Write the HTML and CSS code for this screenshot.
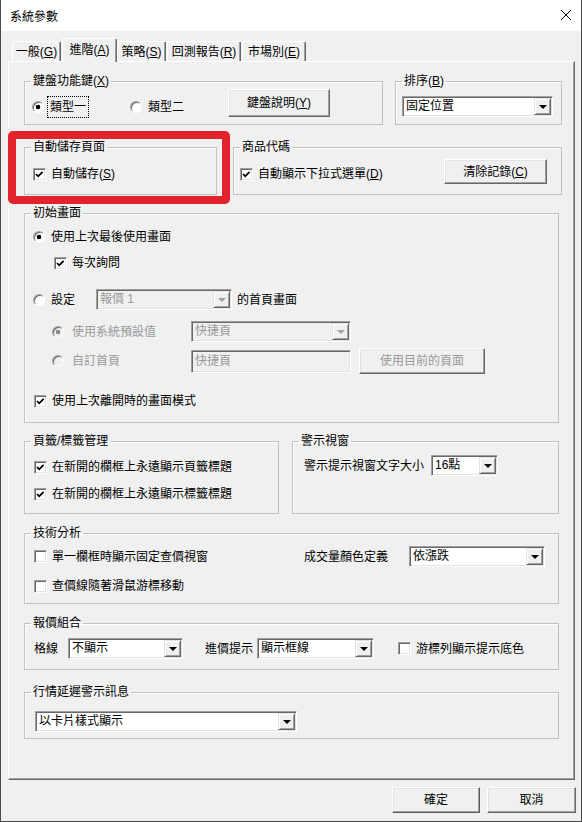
FILE: index.html
```html
<!DOCTYPE html>
<html lang="zh-Hant">
<head>
    <meta charset="UTF-8">
    <title>系統參數</title>
    <link rel="stylesheet" href="styles.css">
</head>
<body>
<div class="window">
    <div class="titlebar">
        <span class="title">系統參數</span>
        <svg class="close" width="12" height="12" viewBox="0 0 12 12">
            <path d="M1 1 L11 11 M11 1 L1 11" stroke="#000" stroke-width="1" fill="none"/>
        </svg>
    </div>

    <div class="tabs">
        <div class="tab tab-general">一般(<u>G</u>)</div>
        <div class="tab tab-adv active">進階(<u>A</u>)</div>
        <div class="tab tab-strategy">策略(<u>S</u>)</div>
        <div class="tab tab-report">回測報告(<u>R</u>)</div>
        <div class="tab tab-market">市場別(<u>E</u>)</div>
    </div>

    <div class="panel">
        <!-- keyboard / sort -->
        <div class="row row-keys">
            <fieldset class="group g-keys">
                <legend>鍵盤功能鍵(<u>X</u>)</legend>
                <div class="keys-body">
                    <div class="radio radio-type1"><span class="dot on"></span><span class="focus-text">類型一</span></div>
                    <div class="radio radio-type2"><span class="dot"></span><span>類型二</span></div>
                    <button class="btn btn-keys">鍵盤說明(<u>Y</u>)</button>
                </div>
            </fieldset>
            <fieldset class="group g-sort">
                <legend>排序(<u>B</u>)</legend>
                <div class="sort-body">
                    <div class="combo combo-sort"><span class="combo-value">固定位置</span><span class="combo-arrow"></span></div>
                </div>
            </fieldset>
        </div>

        <!-- auto save / symbol -->
        <div class="row row-save">
            <fieldset class="group g-save">
                <legend>自動儲存頁面</legend>
                <div class="save-body">
                    <div class="check"><span class="box"><svg width="11" height="11" viewBox="0 0 11 11"><path d="M2 5 L4.2 7.3 L8.6 2.8" stroke="#000" stroke-width="1.8" fill="none"/></svg></span><span>自動儲存(<u>S</u>)</span></div>
                </div>
            </fieldset>
            <fieldset class="group g-symbol">
                <legend>商品代碼</legend>
                <div class="symbol-body">
                    <div class="check"><span class="box"><svg width="11" height="11" viewBox="0 0 11 11"><path d="M2 5 L4.2 7.3 L8.6 2.8" stroke="#000" stroke-width="1.8" fill="none"/></svg></span><span>自動顯示下拉式選單(<u>D</u>)</span></div>
                    <button class="btn btn-clear">清除記錄(<u>C</u>)</button>
                </div>
            </fieldset>
        </div>

        <!-- start page -->
        <div class="row row-start">
            <fieldset class="group g-start">
                <legend>初始畫面</legend>
                <div class="start-body">
                    <div class="line line-last">
                        <div class="radio"><span class="dot on"></span><span>使用上次最後使用畫面</span></div>
                    </div>
                    <div class="line line-ask">
                        <div class="check"><span class="box"><svg width="11" height="11" viewBox="0 0 11 11"><path d="M2 5 L4.2 7.3 L8.6 2.8" stroke="#000" stroke-width="1.8" fill="none"/></svg></span><span>每次詢問</span></div>
                    </div>
                    <div class="line line-set">
                        <div class="radio"><span class="dot"></span><span>設定</span></div>
                        <div class="combo combo-quote disabled"><span class="combo-value">報價 1</span><span class="combo-arrow"></span></div>
                        <span class="home-label">的首頁畫面</span>
                    </div>
                    <div class="line line-default">
                        <div class="radio sub disabled"><span class="dot on"></span><span>使用系統預設值</span></div>
                        <div class="combo combo-page disabled"><span class="combo-value">快捷頁</span><span class="combo-arrow"></span></div>
                    </div>
                    <div class="line line-custom">
                        <div class="radio sub disabled"><span class="dot"></span><span>自訂首頁</span></div>
                        <div class="field disabled">快捷頁</div>
                        <button class="btn btn-current disabled">使用目前的頁面</button>
                    </div>
                    <div class="line line-mode">
                        <div class="check"><span class="box"><svg width="11" height="11" viewBox="0 0 11 11"><path d="M2 5 L4.2 7.3 L8.6 2.8" stroke="#000" stroke-width="1.8" fill="none"/></svg></span><span>使用上次離開時的畫面模式</span></div>
                    </div>
                </div>
            </fieldset>
        </div>

        <!-- tabs management / alert -->
        <div class="row row-tabs">
            <fieldset class="group g-tabs">
                <legend>頁籤/標籤管理</legend>
                <div class="tabs-body">
                    <div class="check"><span class="box"><svg width="11" height="11" viewBox="0 0 11 11"><path d="M2 5 L4.2 7.3 L8.6 2.8" stroke="#000" stroke-width="1.8" fill="none"/></svg></span><span>在新開的欄框上永遠顯示頁籤標題</span></div>
                    <div class="check check-second"><span class="box"><svg width="11" height="11" viewBox="0 0 11 11"><path d="M2 5 L4.2 7.3 L8.6 2.8" stroke="#000" stroke-width="1.8" fill="none"/></svg></span><span>在新開的欄框上永遠顯示標籤標題</span></div>
                </div>
            </fieldset>
            <fieldset class="group g-alert">
                <legend>警示視窗</legend>
                <div class="alert-body">
                    <span class="alert-label">警示提示視窗文字大小</span>
                    <div class="combo combo-size"><span class="combo-value">16點</span><span class="combo-arrow"></span></div>
                </div>
            </fieldset>
        </div>

        <!-- technical analysis -->
        <div class="row row-tech">
            <fieldset class="group g-tech">
                <legend>技術分析</legend>
                <div class="tech-body">
                    <div class="check"><span class="box"></span><span>單一欄框時顯示固定查價視窗</span></div>
                    <div class="volume">
                        <span>成交量顏色定義</span>
                        <div class="combo combo-volume"><span class="combo-value">依漲跌</span><span class="combo-arrow"></span></div>
                    </div>
                    <div class="check"><span class="box"></span><span>查價線隨著滑鼠游標移動</span></div>
                </div>
            </fieldset>
        </div>

        <!-- quote group -->
        <div class="row row-quote">
            <fieldset class="group g-quote">
                <legend>報價組合</legend>
                <div class="quote-body">
                    <span>格線</span>
                    <div class="combo combo-grid"><span class="combo-value">不顯示</span><span class="combo-arrow"></span></div>
                    <span class="price-label">進價提示</span>
                    <div class="combo combo-price"><span class="combo-value">顯示框線</span><span class="combo-arrow"></span></div>
                    <div class="check check-cursor"><span class="box"></span><span>游標列顯示提示底色</span></div>
                </div>
            </fieldset>
        </div>

        <!-- delay alert -->
        <div class="row row-delay">
            <fieldset class="group g-delay">
                <legend>行情延遲警示訊息</legend>
                <div class="delay-body">
                    <div class="combo combo-delay"><span class="combo-value">以卡片樣式顯示</span><span class="combo-arrow"></span></div>
                </div>
            </fieldset>
        </div>
    </div>

    <div class="actions">
        <button class="btn btn-ok">確定</button>
        <button class="btn btn-cancel">取消</button>
    </div>

    <div class="highlight"></div>
</div>
</body>
</html>
```

FILE: styles.css
```css
* {
    margin: 0;
    padding: 0;
    box-sizing: border-box;
}

body {
    width: 582px;
    height: 822px;
    font-family: "Liberation Sans", "Noto Sans CJK TC", sans-serif;
    font-size: 12px;
    line-height: 14px;
    color: #000;
    background: #fff;
}

u {
    text-decoration: underline;
}

.window {
    position: relative;
    width: 582px;
    height: 822px;
    background: #f0f0f0;
    border: 1px solid #4a4a4a;
    border-top: none;
}

/* title bar */
.titlebar {
    height: 31px;
    background: #fff;
    display: flex;
    align-items: center;
    justify-content: space-between;
    padding: 2px 9px 0 9px;
}

.close {
    display: block;
    margin-bottom: 3px;
}

/* tabs */
.tabs {
    height: 30px;
    display: flex;
    align-items: flex-end;
    padding-left: 11px;
}

.tab {
    height: 20px;
    display: flex;
    align-items: center;
    justify-content: center;
    border-top: 1px solid #fff;
    border-left: 1px solid #fff;
    border-right: 1px solid #696969;
    border-radius: 2px 2px 0 0;
    box-shadow: inset -1px 0 #a0a0a0;
    padding-top: 1px;
}

.tab-general { width: 49px; }
.tab-adv { width: 55px; margin-left: 1px; }
.tab-strategy { width: 49px; }
.tab-report { width: 74px; margin-left: 1px; }
.tab-market { width: 64px; margin-left: 1px; }

.tab.active {
    position: relative;
    z-index: 1;
    height: 24px;
    margin-bottom: -1px;
    background: #f0f0f0;
    padding-top: 0;
    padding-bottom: 1px;
}

/* tab page */
.panel {
    width: 567px;
    height: 719px;
    margin-left: 7px;
    border: 1px solid #fff;
    border-right-color: #696969;
    border-bottom-color: #696969;
    box-shadow: inset -1px -1px #a0a0a0;
    padding: 12px 0 0 15px;
}

.row {
    display: flex;
}

.row-keys { gap: 12px; }
.row-save { gap: 16px; margin-top: 15px; }
.row-start { margin-top: 11px; }
.row-tabs { gap: 13px; margin-top: 11px; }
.row-tech { margin-top: 12px; }
.row-quote { margin-top: 12px; }
.row-delay { margin-top: 15px; }

.group {
    border: 1px solid #c2c2c2;
    box-shadow: inset 1px 1px #fff;
    min-width: 0;
}

.group legend {
    margin-left: 6px;
    padding: 0 2px;
    line-height: 14px;
}

.g-keys { width: 359px; height: 51px; }
.g-sort { width: 167px; height: 51px; }
.g-save { width: 193px; height: 55px; }
.g-symbol { width: 329px; height: 55px; }
.g-start { width: 535px; height: 217px; }
.g-tabs { width: 255px; height: 80px; }
.g-alert { width: 267px; height: 80px; }
.g-tech { width: 535px; height: 78px; }
.g-quote { width: 535px; height: 54px; }
.g-delay { width: 535px; height: 54px; }

/* controls */
.check,
.radio {
    display: flex;
    align-items: center;
    height: 14px;
    white-space: nowrap;
}

.check { gap: 5px; }
.radio { gap: 6px; }

.box {
    width: 13px;
    height: 13px;
    flex: none;
    background: #fff;
    border: 1px solid;
    border-color: #a0a0a0 #fff #fff #a0a0a0;
    box-shadow: inset 1px 1px #696969, inset -1px -1px #e3e3e3;
}

.box svg {
    display: block;
}

.dot {
    width: 12px;
    height: 12px;
    flex: none;
    border-radius: 50%;
    background: #fff;
    border: 1px solid;
    border-color: #a0a0a0 #fff #fff #a0a0a0;
    box-shadow: inset 1px 1px #696969;
}

.dot.on {
    background: radial-gradient(circle, #000 0 2px, #fff 2.6px);
}

.disabled {
    color: #9a9a9a;
}

.radio.disabled .dot {
    background: #f0f0f0;
}

.radio.disabled .dot.on {
    background: radial-gradient(circle, #8a8a8a 0 2px, #f0f0f0 2.6px);
}

.btn {
    font: inherit;
    color: #000;
    background: #f0f0f0;
    border: 1px solid;
    border-color: #fff #696969 #696969 #fff;
    box-shadow: inset -1px -1px #a0a0a0, inset 1px 1px #e3e3e3;
    display: flex;
    align-items: center;
    justify-content: center;
    flex: none;
}

.btn.disabled {
    color: #9a9a9a;
}

.combo {
    display: flex;
    height: 21px;
    flex: none;
    padding: 1px;
    background: #fff;
    border: 1px solid;
    border-color: #a0a0a0 #fff #fff #a0a0a0;
    box-shadow: inset 1px 1px #696969, inset -1px -1px #e3e3e3;
}

.combo-value {
    flex: 1;
    padding-left: 2px;
    line-height: 17px;
    white-space: nowrap;
}

.combo-arrow {
    width: 17px;
    display: flex;
    align-items: center;
    justify-content: center;
    background: #f0f0f0;
    border: 1px solid;
    border-color: #e3e3e3 #696969 #696969 #e3e3e3;
    box-shadow: inset 1px 1px #fff, inset -1px -1px #a0a0a0;
}

.combo-arrow::after {
    content: "";
    border-left: 4px solid transparent;
    border-right: 4px solid transparent;
    border-top: 4px solid #000;
}

.combo.disabled {
    background: #f0f0f0;
}

.combo.disabled .combo-arrow::after {
    border-top-color: #a0a0a0;
}

.field {
    width: 160px;
    height: 23px;
    flex: none;
    padding: 1px 0 0 3px;
    line-height: 19px;
    background: #f0f0f0;
    border: 1px solid;
    border-color: #a0a0a0 #fff #fff #a0a0a0;
    box-shadow: inset 1px 1px #696969, inset -1px -1px #e3e3e3;
}

/* keyboard group */
.keys-body {
    display: flex;
    align-items: flex-start;
    padding-left: 7px;
}

.radio-type1 {
    height: 20px;
    margin-top: 9px;
    gap: 4px;
}

.focus-text {
    padding: 2px 2px 2px 2px;
    outline: 1px dotted #000;
    outline-offset: 0;
    line-height: 16px;
}

.radio-type2 {
    height: 20px;
    margin-top: 9px;
    margin-left: 42px;
}

.btn-keys {
    width: 102px;
    height: 28px;
    margin-top: 1px;
    margin-left: 44px;
}

.sort-body {
    padding: 8px 0 0 6px;
}

.combo-sort { width: 151px; }

/* auto save */
.save-body {
    padding: 13px 0 0 8px;
}

.symbol-body {
    display: flex;
    align-items: flex-start;
    padding-left: 6px;
}

.symbol-body .check {
    margin-top: 13px;
}

.btn-clear {
    width: 103px;
    height: 25px;
    margin: 5px 14px 0 auto;
}

/* start page */
.start-body {
    padding-left: 8px;
}

.line {
    display: flex;
    align-items: center;
}

.line-last { margin-top: 10px; }
.line-ask { margin-top: 12px; padding-left: 21px; }
.line-set { margin-top: 19px; height: 21px; }
.line-default { margin-top: 11px; height: 21px; padding-left: 19px; }
.line-custom { margin-top: 6px; height: 26px; padding-left: 19px; }
.line-mode { margin-top: 20px; padding-left: 1px; }

.line-set .radio {
    width: 63px;
}

.combo-quote { width: 136px; }

.home-label {
    margin-left: 5px;
}

.radio.sub {
    width: 139px;
    gap: 8px;
}

.combo-page { width: 160px; }

.btn-current {
    width: 126px;
    height: 26px;
    margin-left: 8px;
}

/* tabs management */
.tabs-body {
    padding: 12px 0 0 9px;
}

.check-second {
    margin-top: 13px;
}

.alert-body {
    display: flex;
    align-items: center;
    padding: 7px 0 0 11px;
}

.alert-label {
    width: 127px;
}

.combo-size { width: 67px; }

/* technical analysis */
.tech-body {
    display: grid;
    grid-template-columns: 270px auto;
    grid-template-rows: 21px 14px;
    row-gap: 12px;
    align-items: center;
    margin-top: 6px;
    padding-left: 9px;
}

.volume {
    display: flex;
    align-items: center;
}

.combo-volume {
    width: 136px;
    margin-left: 21px;
}

/* quote group */
.quote-body {
    display: flex;
    align-items: center;
    height: 21px;
    margin-top: 8px;
    padding-left: 9px;
}

.combo-grid {
    width: 115px;
    margin-left: 10px;
}

.price-label {
    margin-left: 22px;
}

.combo-price {
    width: 117px;
    margin-left: 4px;
}

.check-cursor {
    margin-left: 24px;
}

/* delay alert */
.delay-body {
    padding: 12px 0 0 10px;
}

.combo-delay { width: 262px; }

/* dialog buttons */
.actions {
    display: flex;
    justify-content: flex-end;
    gap: 7px;
    margin-top: 7px;
    padding-right: 5px;
}

.btn-ok {
    width: 88px;
    height: 26px;
    border-color: #fff #5a5a5a #5a5a5a #fff;
}

.btn-cancel {
    width: 89px;
    height: 26px;
}

/* annotation frame around the auto-save group */
.highlight {
    position: absolute;
    left: 7px;
    top: 131px;
    width: 222px;
    height: 73px;
    border: 8px solid #e3232c;
    border-radius: 5px;
}
```
